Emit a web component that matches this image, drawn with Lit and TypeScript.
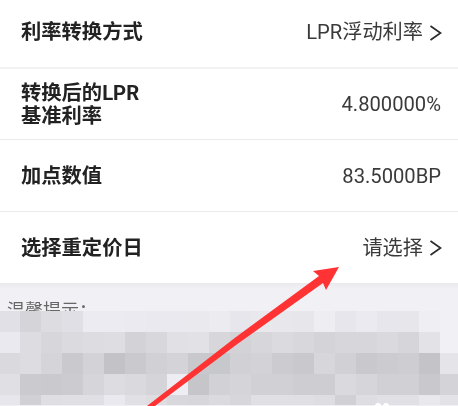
import { LitElement, html, css, svg } from "lit";
import { customElement } from "lit/decorators.js";

const ROWS: { title: string[]; value: string; chevron?: boolean }[] = [
  { title: ["利率转换方式"], value: "LPR浮动利率", chevron: true },
  { title: ["转换后的LPR", "基准利率"], value: "4.800000%" },
  { title: ["加点数值"], value: "83.5000BP" },
  { title: ["选择重定价日"], value: "请选择", chevron: true },
];

const MOSAIC = [
  "e0e0e6 d4d4d9 dcdce1 dfdfe5 ebebf1 ebebf1 eaeaf0 e9e9ef e9e9ef e9e9ee ebebf0 e6e6ec e8e8ed e7e7ec e6e6eb ededf2 e6e6ec eaeaf0 e6e6ec e6e6eb eeeef3 f0f0f5",
  "e9e9ef dcdce1 d6d6db dadadf dcdce1 dddde2 d2d2d7 d7d7dc e0e0e5 e1e1e6 d6d6db d2d2d7 d6d6db dadadf d7d7dc d3d3d8 d6d6db d6d6db dadade d6d6da e2e2e7 f0f0f5",
  "d9d9de dcdce1 d4d4d9 c9c9ce d2d2d7 c2c2c7 c9c9ce d0d0d5 d3d3d8 c8c8cd c7c8cc d0d0d5 d2d2d7 cbcbd0 c8c8cd d6d6db d0d0d5 c8c8cd cbcbd0 cdcdd2 c3c3c8 e4e4e9",
  "dfdfe4 cacacf c9c9ce cbcbd0 d5d5da dcdce1 d9d9de d4d4d9 ededf3 c5c5ca d1d1d6 d4d4d9 d0d0d5 d0d0d5 cdcdd2 cdcdd2 d9d9de d5d5da d0d0d5 d0d0d5 c8c8cd d3d3d8",
  "e6e6ec d0d0d5 dedee3 dfdfe4 dfdfe4 e9e9ef e0e0e5 dddde2 d7d7dc d6d6db dadadf d6d6db dfdfe4 dfdfe4 dfdfe4 dddde2 d0d0d5 dddde2 e0e0e5 e0e0e5 e8e8ed e2e2e7",
].map((r) => r.split(" "));

@customElement("app-root")
export class AppRoot extends LitElement {
  static styles = css`
    :host {
      display: block;
      position: relative;
      width: 458px;
      height: 406px;
      overflow: hidden;
      background: #f0f0f5;
      font-family: Roboto, "Noto Sans CJK SC", sans-serif;
    }
    .list {
      background: #fff;
      display: flex;
      flex-direction: column;
    }
    .row {
      height: 71px;
      box-sizing: border-box;
      padding: 0 17px 0 21px;
      display: flex;
      align-items: center;
      justify-content: space-between;
      border-bottom: 1px solid #ebebee;
    }
    .row:first-child {
      height: 69px;
      padding-bottom: 2px;
      border-bottom: 2px solid #f2f2f4;
    }
    .row:nth-child(2) .title {
      margin-top: 1px;
    }
    .row:nth-child(3) {
      height: 72px;
      padding-top: 1px;
    }
    .row:last-child {
      padding-top: 1px;
      border-bottom: none;
    }
    .title {
      font-size: 20.3px;
      line-height: 23px;
      font-weight: 700;
      color: #222;
      filter: blur(0.35px);
    }
    .title div {
      white-space: nowrap;
    }
    .value {
      font-size: 20.2px;
      line-height: 23px;
      color: #3a3a3a;
      display: flex;
      align-items: center;
      gap: 6px;
      filter: blur(0.3px);
    }
    .chev {
      width: 13px;
      height: 16px;
      flex: none;
      margin-right: -1px;
    }
    .notice {
      height: 28px;
      box-sizing: border-box;
      padding: 16px 0 0 7px;
      overflow: hidden;
      font-size: 18px;
      line-height: 24px;
      color: #666;
      background: linear-gradient(#e9e9ee, #f0f0f5 6px);
      filter: blur(0.3px);
    }
    .mosaic {
      display: grid;
      grid-template-columns: 20px repeat(20, 21px) 18px;
      grid-template-rows: repeat(4, 21px) 10px;
      filter: blur(0.7px);
    }
    .arrow {
      position: absolute;
      left: 0;
      top: 0;
      width: 458px;
      height: 406px;
      pointer-events: none;
    }
    .dot {
      position: absolute;
      top: 403px;
      width: 6px;
      height: 6px;
      border-radius: 50%;
      background: #fff;
    }
    .dot.a { left: 375px; }
    .dot.b { left: 383px; }
  `;

  render() {
    return html`
      <div class="list">
        ${ROWS.map(
          (r) => html`
            <div class="row">
              <div class="title">${r.title.map((t) => html`<div>${t}</div>`)}</div>
              <div class="value">
                <span>${r.value}</span>
                ${r.chevron
                  ? html`<svg class="chev" viewBox="0 0 13 16">
                      <path d="M1.5 1 L11.5 8 L1.5 15" fill="none" stroke="#2c2c2c" stroke-width="1.7" />
                    </svg>`
                  : ""}
              </div>
            </div>
          `
        )}
      </div>
      <div class="notice">温馨提示：</div>
      <div class="mosaic">
        ${MOSAIC.flat().map((c) => html`<div style="background:#${c}"></div>`)}
      </div>
      <span class="dot a"></span><span class="dot b"></span>
      <svg class="arrow" viewBox="0 0 458 406">
        ${svg`<polygon fill="#ff3333" points="147,406 236,337 319,276 313,271 339,267 326,290 323,283 236,345 155,406" />`}
      </svg>
    `;
  }
}
